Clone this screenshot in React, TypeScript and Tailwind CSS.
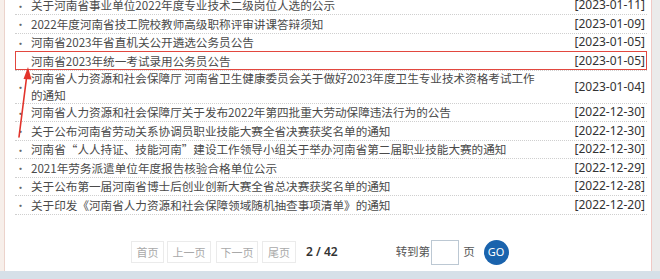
import React from "react";

type Notice = {
  title: React.ReactNode;
  date: string;
  tall?: boolean;
  marked?: boolean;
};

const notices: Notice[] = [
  { title: "关于河南省事业单位2022年度专业技术二级岗位人选的公示", date: "2023-01-11" },
  { title: "2022年度河南省技工院校教师高级职称评审讲课答辩须知", date: "2023-01-09" },
  { title: "河南省2023年省直机关公开遴选公务员公告", date: "2023-01-05" },
  { title: "河南省2023年统一考试录用公务员公告", date: "2023-01-05", marked: true },
  {
    title: (
      <>
        河南省人力资源和社会保障厅 河南省卫生健康委员会关于做好2023年度卫生专业技术资格考试工作
        <br />
        的通知
      </>
    ),
    date: "2023-01-04",
    tall: true,
  },
  { title: "河南省人力资源和社会保障厅关于发布2022年第四批重大劳动保障违法行为的公告", date: "2022-12-30" },
  { title: "关于公布河南省劳动关系协调员职业技能大赛全省决赛获奖名单的通知", date: "2022-12-30" },
  { title: "河南省“人人持证、技能河南”建设工作领导小组关于举办河南省第二届职业技能大赛的通知", date: "2022-12-30" },
  { title: "2021年劳务派遣单位年度报告核验合格单位公示", date: "2022-12-29" },
  { title: "关于公布第一届河南省博士后创业创新大赛全省总决赛获奖名单的通知", date: "2022-12-28" },
  { title: "关于印发《河南省人力资源和社会保障领域随机抽查事项清单》的通知", date: "2022-12-20" },
];

const pageButtons = [
  { label: "首页", w: "w-[33px]", ml: "ml-0" },
  { label: "上一页", w: "w-[44px]", ml: "ml-[3px]" },
  { label: "下一页", w: "w-[42px]", ml: "ml-[5px]" },
  { label: "尾页", w: "w-[34px]", ml: "ml-[4px]" },
];

function NoticeRow({ item }: { item: Notice }) {
  return (
    <li
      className={`relative flex items-center border-b border-dotted border-[#cfcfcf] ${
        item.tall ? "h-[33px]" : "h-[18.5px]"
      }`}
    >
      <span className="w-[16px] shrink-0 pt-[2px] text-[11px] leading-none text-[#666]">
        {item.marked ? "" : "·"}
      </span>

      <span className="w-[511px] shrink-0 whitespace-nowrap text-[11.6px] leading-[16.5px] text-[#4a4a4a]">
        {item.title}
      </span>

      <span className="flex-1 whitespace-nowrap pr-[2px] text-right font-['Noto_Sans',sans-serif] text-[12px] leading-none text-[#333]">
        [{item.date}]
      </span>

      {/* annotation box */}
      {item.marked && (
        <span className="pointer-events-none absolute -top-[1px] right-0 bottom-0 left-0 border-[1.5px] border-[#e2473f]" />
      )}
    </li>
  );
}

export default function App() {
  return (
    <div className="relative flex h-[279px] w-[660px] flex-col overflow-hidden bg-white font-['Noto_Sans_CJK_SC','Noto_Sans',sans-serif]">
      <div className="flex h-[271px]">
        <div className="w-[5px] border-r border-[#ecd3cb] bg-[#f7efea]" />

        <div className="flex flex-1 flex-col bg-white">
          {/* Notice list */}
          <ul className="-mt-[3.5px] pl-[10px] pr-[4px]">
            {notices.map((item, i) => (
              <NoticeRow key={i} item={item} />
            ))}
          </ul>

          {/* Pagination */}
          <div className="mt-[25px] flex h-[25px] items-center pl-[126px]">
            {pageButtons.map((b) => (
              <span
                key={b.label}
                className={`flex h-[22px] items-center justify-center border border-[#ebebeb] text-[11px] text-[#a9a9a9] ${b.w} ${b.ml}`}
              >
                {b.label}
              </span>
            ))}

            <span className="ml-[10px] font-['Noto_Sans',sans-serif] text-[12px] font-semibold text-[#333]">
              2 / 42
            </span>

            <span className="ml-[58px] text-[11.5px] text-[#555]">
              转到第
            </span>

            <span className="ml-[1px] h-[25px] w-[28px] border border-[#bcc8d3] bg-white" />

            <span className="ml-[4px] text-[11.5px] text-[#555]">页</span>

            <span className="ml-[9px] flex h-[25px] w-[25px] items-center justify-center rounded-full bg-[#1a63ad] font-['Noto_Sans',sans-serif] text-[11px] text-white">
              GO
            </span>
          </div>
        </div>

        <div className="w-[1px] bg-[#f0c9c5]" />
        <div className="w-[8px] bg-[#ebebeb]" />
      </div>

      <div className="h-[8px] bg-[#d6e0e8]" />

      {/* red annotation arrow */}
      <svg
        className="pointer-events-none absolute left-0 top-0"
        width="60"
        height="150"
        viewBox="0 0 60 150"
      >
        <line
          x1="19"
          y1="137"
          x2="27"
          y2="74"
          stroke="#e2332b"
          strokeWidth="1.6"
          strokeLinecap="round"
        />
        <polygon points="28,67 23.5,79 31.5,79.5" fill="#e2332b" />
      </svg>
    </div>
  );
}
